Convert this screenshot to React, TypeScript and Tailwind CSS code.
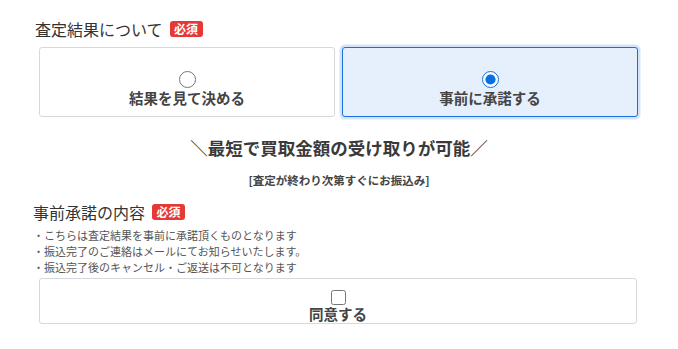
import { useState } from 'react';

const font = { fontFamily: '"Noto Sans CJK JP", "Noto Sans", sans-serif' };

function Badge() {
  return (
    <span className="ml-[7px] inline-flex h-[16px] items-center rounded-[3px] bg-[#e53935] px-[4.5px] text-[12px] font-bold leading-none text-white">
      必須
    </span>
  );
}

const notes = [
  '・こちらは査定結果を事前に承諾頂くものとなります',
  '・振込完了のご連絡はメールにてお知らせいたします。',
  '・振込完了後のキャンセル・ご返送は不可となります',
];

export default function App() {
  const [choice, setChoice] = useState<'after' | 'before'>('before');
  const [agree, setAgree] = useState(false);

  const options = [
    { id: 'after' as const, label: '結果を見て決める' },
    { id: 'before' as const, label: '事前に承諾する' },
  ];

  return (
    <div className="min-h-[349px] w-[678px] bg-white text-[#333]" style={font}>
      <div className="pl-[35px] pt-[17px] flex items-center">
        <span className="text-[16px] leading-[24px]">査定結果について</span>
        <Badge />
      </div>

      <div className="mt-[6px] ml-[39px] grid w-[599px] grid-cols-2 gap-[7px]">
        {options.map((o) => {
          const on = choice === o.id;
          return (
            <label
              key={o.id}
              className={
                on
                  ? 'flex h-[70px] cursor-pointer flex-col items-center rounded-[3px] border-[1.5px] border-[#1a6fe0] bg-[#e6effc] pt-[22.5px] shadow-[0_0_0_2.5px_#d3e3f8]'
                  : 'flex h-[70px] cursor-pointer flex-col items-center rounded-[3px] border border-[#d5d8dc] bg-white pt-[23px]'
              }
            >
              <input
                type="radio"
                name="result"
                checked={on}
                onChange={() => setChoice(o.id)}
                className="m-0 h-[17px] w-[17px] accent-[#0a6fe0]"
              />
              <span className="text-[14.5px] font-bold leading-[20px] text-[#444]">{o.label}</span>
            </label>
          );
        })}
      </div>

      <div className="mt-[18px] text-center text-[17.5px] font-bold leading-[26px] text-[#3a3a3a]">
        ＼最短で買取金額の受け取りが可能／
      </div>
      <div className="mt-[11px] text-center text-[11.5px] font-bold leading-[16px] text-[#444]">
        [査定が終わり次第すぐにお振込み]
      </div>

      <div className="mt-[12px] pl-[33px] flex items-center">
        <span className="text-[16px] leading-[24px]">事前承諾の内容</span>
        <Badge />
      </div>

      <ul className="mt-[3px] pl-[33px] text-[11px] leading-[16px] text-[#555]">
        {notes.map((n) => (
          <li key={n}>{n}</li>
        ))}
      </ul>

      <label className="mt-[3px] ml-[39px] flex h-[46px] w-[598px] cursor-pointer flex-col items-center rounded-[3px] border border-[#d5d8dc] pt-[11px]">
        <input
          type="checkbox"
          checked={agree}
          onChange={(e) => setAgree(e.target.checked)}
          className="m-0 h-[17px] w-[17px] accent-[#0a6fe0]"
        />
        <span className="text-[14.5px] font-bold leading-[18px] text-[#444]">同意する</span>
      </label>
    </div>
  );
}
